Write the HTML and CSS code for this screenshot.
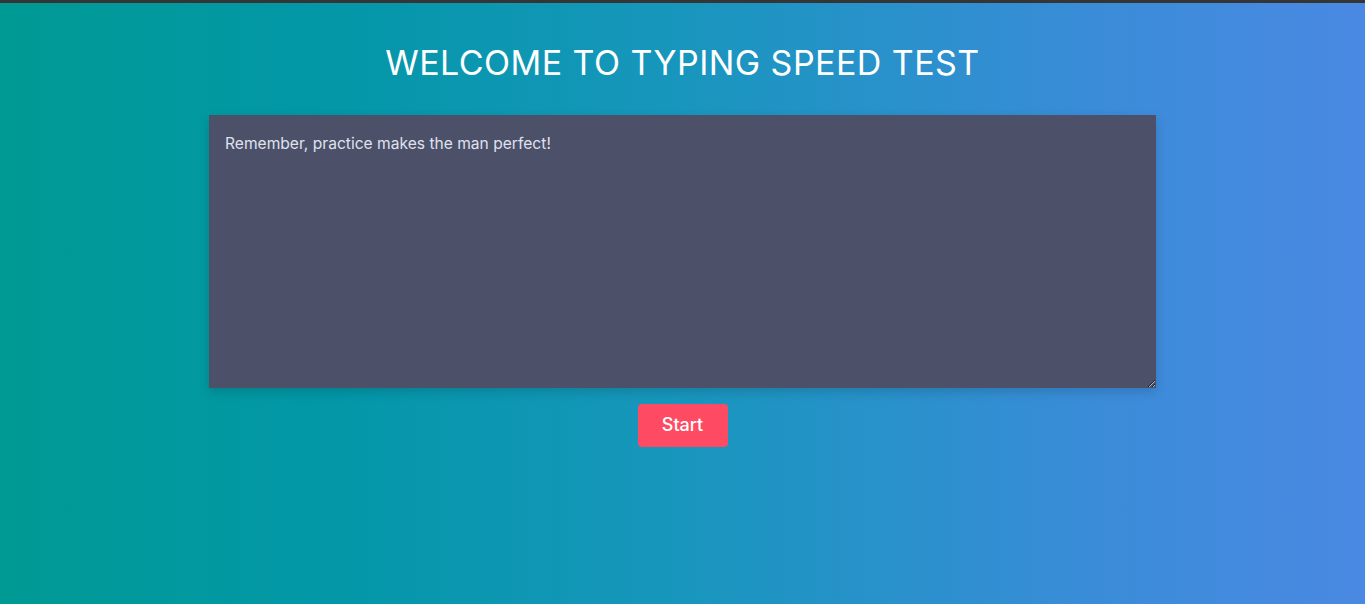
FILE: index.html
```html
<!DOCTYPE html>
<html>
<head>
<meta charset="utf-8">
<link rel="stylesheet" href="styles.css">
</head>
<body>
<div class="topbar"></div>
<main class="app">
  <h1 class="title">WELCOME TO TYPING SPEED TEST</h1>
  <textarea class="typing-area" placeholder="Remember, practice makes the man perfect!"></textarea>
  <button class="start-btn">Start</button>
</main>
</body>
</html>
```

FILE: styles.css
```css
html, body {
  margin: 0;
  padding: 0;
  height: 100%;
}
body {
  font-family: Inter, "Noto Sans", sans-serif;
  background: linear-gradient(to right, #009a94 0%, #0397a8 25%, #1896bd 50%, #3a8cd8 80%, #4a89e3 100%);
  display: flex;
  flex-direction: column;
  overflow: hidden;
}
.topbar {
  height: 3px;
  background: #353535;
  flex: none;
}
.app {
  display: flex;
  flex-direction: column;
  align-items: center;
}
.title {
  margin: 39px 0 0;
  font-size: 34px;
  font-weight: 400;
  letter-spacing: 0.45px;
  line-height: 42px;
  color: #ffffff;
}
.typing-area {
  margin-top: 31px;
  width: 947px;
  height: 273px;
  box-sizing: border-box;
  padding: 19px 16px 17px;
  background: #4c5069;
  border: none;
  outline: none;
  color: #e4e6f0;
  font-family: Inter, "Noto Sans", sans-serif;
  font-size: 15.6px;
  line-height: 20px;
  box-shadow: 0 4px 10px rgba(0, 0, 0, 0.15);
}
.typing-area::placeholder {
  color: #dfe2ee;
  opacity: 1;
}
.start-btn {
  margin-top: 16px;
  width: 90px;
  height: 43px;
  padding: 0 0 2px;
  background: #ff4a63;
  color: #ffffff;
  border: none;
  border-radius: 4px;
  font-family: Inter, "Noto Sans", sans-serif;
  font-size: 18px;
  font-weight: 500;
  cursor: pointer;
}
```
